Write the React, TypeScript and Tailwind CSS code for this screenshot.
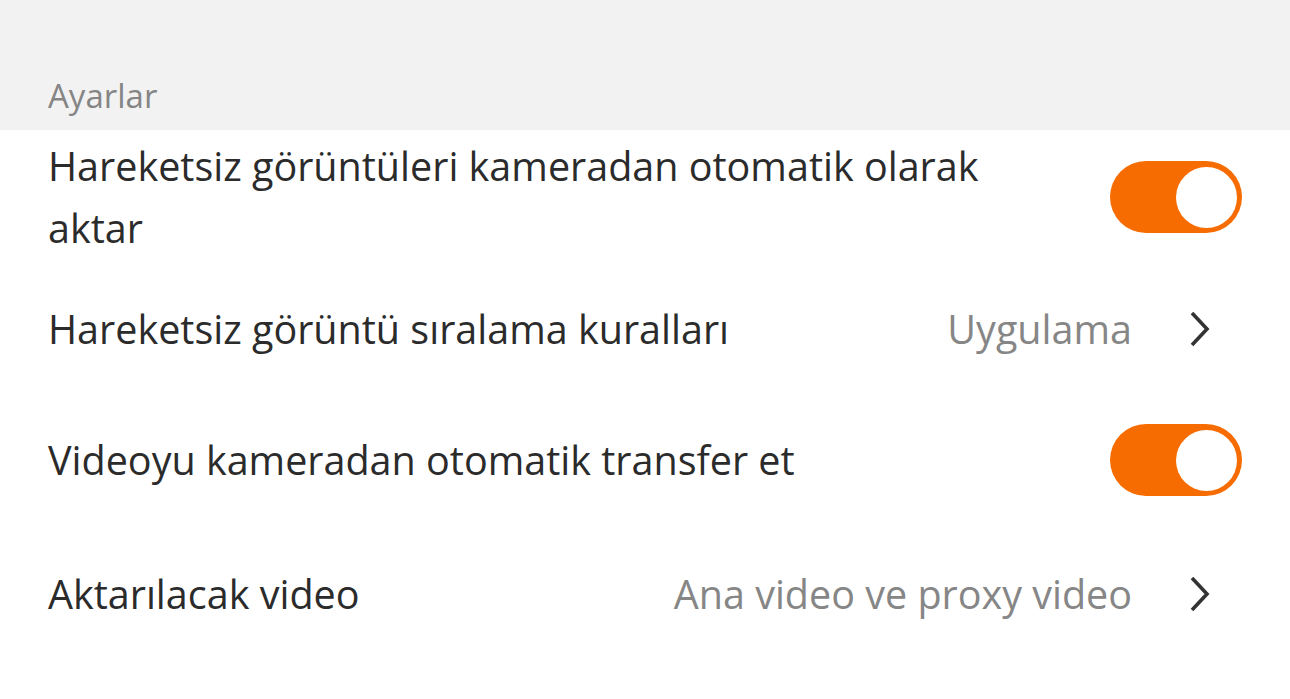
import React from "react";

function Toggle() {
  return (
    <div className="w-[132px] h-[72px] rounded-full bg-[#f76c00] flex items-center justify-end pr-[5px] shrink-0">
      <div className="w-[61px] h-[61px] rounded-full bg-white" />
    </div>
  );
}

function Chevron() {
  return (
    <svg width="20" height="36" viewBox="0 0 20 36" className="shrink-0">
      <path d="M2 2 L17 18 L2 34" fill="none" stroke="#333333" strokeWidth="3.6" />
    </svg>
  );
}

export default function App() {
  const font = { fontFamily: '"Open Sans", "Noto Sans", sans-serif' };
  return (
    <div className="w-[1290px] h-[699px] bg-white overflow-hidden" style={font}>
      <div className="h-[130px] bg-[#f2f2f2] flex items-end pl-[48px] pb-[14px]">
        <span className="text-[33px] leading-[40px] text-[#858585]">Ayarlar</span>
      </div>
      <div className="h-[132px] pt-[2px] flex items-center justify-between pl-[48px] pr-[48px]">
        <div className="max-w-[960px] text-[39.5px] leading-[62px] text-[#2b2b2b]">
          Hareketsiz görüntüleri kameradan otomatik olarak aktar
        </div>
        <Toggle />
      </div>
      <div className="h-[134px] flex items-center pl-[48px] pr-[80px]">
        <div className="flex-1 text-[39.5px] leading-[62px] text-[#2b2b2b]">Hareketsiz görüntü sıralama kuralları</div>
        <span className="text-[39.5px] leading-[62px] text-[#868686] mr-[58px]">Uygulama</span>
        <Chevron />
      </div>
      <div className="h-[128px] flex items-center pl-[48px] pr-[48px]">
        <div className="flex-1 text-[39.5px] leading-[62px] text-[#2b2b2b]">Videoyu kameradan otomatik transfer et</div>
        <Toggle />
      </div>
      <div className="h-[140px] flex items-center pl-[48px] pr-[80px]">
        <div className="flex-1 text-[39.5px] leading-[62px] text-[#2b2b2b]">Aktarılacak video</div>
        <span className="text-[39.5px] leading-[62px] text-[#868686] mr-[58px]">Ana video ve proxy video</span>
        <Chevron />
      </div>
    </div>
  );
}
